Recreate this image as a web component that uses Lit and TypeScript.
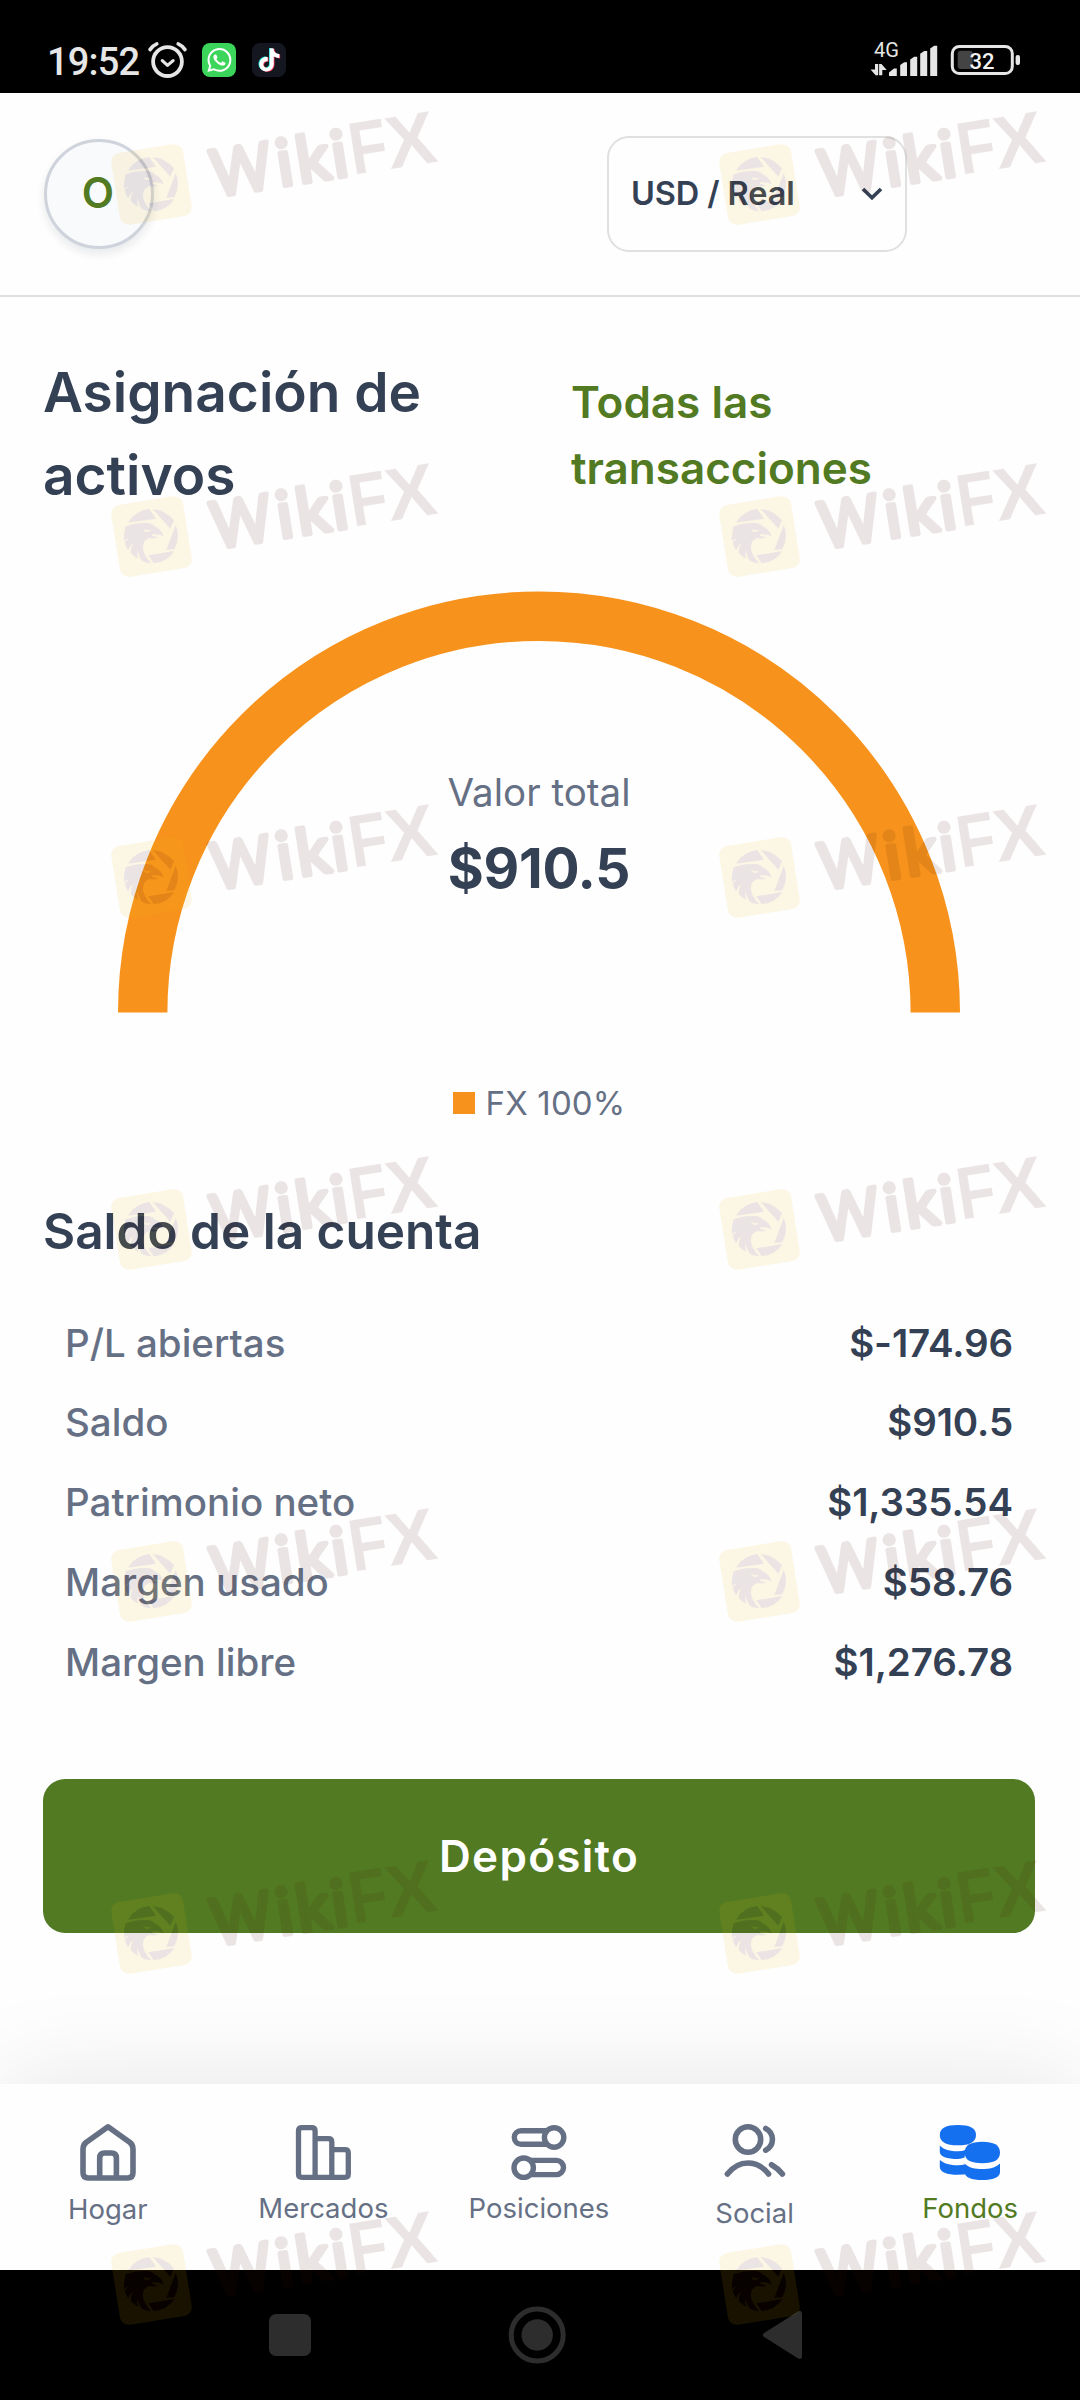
import { LitElement, html, css, svg } from "lit";
import { customElement, property } from "lit/decorators.js";

const NOTE =
  "M12.53.02C13.84 0 15.14.01 16.44 0c.08 1.53.63 3.09 1.75 4.17 1.12 1.11 2.7 1.62 4.24 1.79v4.03c-1.44-.05-2.89-.35-4.2-.97-.57-.26-1.1-.59-1.62-.93-.01 2.92.01 5.84-.02 8.75-.08 1.4-.54 2.79-1.35 3.94-1.31 1.92-3.58 3.17-5.91 3.21-1.43.08-2.86-.31-4.08-1.03-2.02-1.19-3.44-3.37-3.65-5.71-.02-.5-.03-1-.01-1.49.18-1.9 1.12-3.72 2.58-4.96 1.66-1.44 3.98-2.13 6.15-1.72.02 1.48-.04 2.96-.04 4.44-.99-.32-2.15-.23-3.02.37-.63.41-1.11 1.04-1.36 1.75-.21.51-.15 1.07-.14 1.61.24 1.64 1.82 3.02 3.5 2.87 1.12-.01 2.19-.66 2.77-1.61.19-.33.4-.67.41-1.06.1-1.79.06-3.57.07-5.36.01-4.03-.01-8.05.02-12.07z";
const WHATSAPP =
  "M17.472 14.382c-.297-.149-1.758-.867-2.03-.967-.273-.099-.471-.148-.67.15-.197.297-.767.966-.94 1.164-.173.199-.347.223-.644.075-.297-.15-1.255-.463-2.39-1.475-.883-.788-1.48-1.761-1.653-2.059-.173-.297-.018-.458.13-.606.134-.133.298-.347.446-.52.149-.174.198-.298.298-.497.099-.198.05-.371-.025-.52-.075-.149-.669-1.612-.916-2.207-.242-.579-.487-.5-.669-.51-.173-.008-.371-.01-.57-.01-.198 0-.52.074-.792.372-.272.297-1.04 1.016-1.04 2.479 0 1.462 1.065 2.875 1.213 3.074.149.198 2.096 3.2 5.077 4.487.709.306 1.262.489 1.694.625.712.227 1.36.195 1.871.118.571-.085 1.758-.719 2.006-1.413.248-.694.248-1.289.173-1.413-.074-.124-.272-.198-.57-.347m-5.421 7.403h-.004a9.87 9.87 0 01-5.031-1.378l-.361-.214-3.741.982.998-3.648-.235-.374a9.86 9.86 0 01-1.51-5.26c.001-5.45 4.436-9.884 9.888-9.884 2.64 0 5.122 1.03 6.988 2.898a9.825 9.825 0 012.893 6.994c-.003 5.45-4.437 9.884-9.885 9.884m8.413-18.297A11.815 11.815 0 0012.05 0C5.495 0 .16 5.335.157 11.892c0 2.096.547 4.142 1.588 5.945L.057 24l6.305-1.654a11.882 11.882 0 005.683 1.448h.005c6.554 0 11.89-5.335 11.893-11.893a11.821 11.821 0 00-3.48-8.413Z";

@customElement("status-bar")
export class StatusBar extends LitElement {
  static styles = css`
    :host {
      display: flex;
      align-items: flex-start;
      justify-content: space-between;
      box-sizing: border-box;
      height: 93px;
      padding: 31px 60px 0 47px;
      background: #000;
      color: #e6e6e6;
      font-family: Roboto, sans-serif;
    }
    .left {
      display: flex;
      align-items: flex-start;
      padding-top: 10px;
    }
    .time {
      width: 100px;
      font-size: 38px;
      font-weight: 500;
      line-height: 42px;
      letter-spacing: -0.800px;
    }
    .alarm {
      margin-right: 14px;
    }
    .app {
      margin: 2px 16px 0 0;
    }
    svg {
      display: block;
    }
    .right {
      width: 152px;
      height: 50px;
    }
  `;

  render() {
    return html`
      <div class="left">
        <span class="time">19:52</span>
        <svg class="alarm" width="41" height="38" viewBox="0 0 41 38" fill="none" stroke="#e6e6e6" stroke-linecap="round" stroke-linejoin="round">
          <circle cx="20.5" cy="20.6" r="14.4" stroke-width="3.8" />
          <path d="M15.3 19.6l5.2 4.8 5.6-4.8" stroke-width="3.2" />
          <path d="M3 8.600Q6 4.300 9.800 2.800M38 8.600Q35 4.300 31.200 2.800" stroke-width="3.600" />
        </svg>
        <svg class="app" width="34" height="34" viewBox="0 0 34 34">
          <rect width="34" height="34" rx="8" fill="#3bd55b" />
          <path transform="translate(5.400 5)" d=${WHATSAPP} fill="#fff" />
        </svg>
        <svg class="app" width="34" height="34" viewBox="0 0 34 34">
          <rect width="34" height="34" rx="8" fill="#141620" />
          <path transform="translate(5 5) scale(.96)" d=${NOTE} fill="#25e6e0" />
          <path transform="translate(6.600 5.800) scale(.96)" d=${NOTE} fill="#f8385c" />
          <path transform="translate(5.800 5.400) scale(.96)" d=${NOTE} fill="#fff" />
        </svg>
      </div>
      <svg class="right" viewBox="868 31 152 50">
        <text x="874" y="57" font-size="20" textLength="25" lengthAdjust="spacingAndGlyphs" fill="#e6e6e6">4G</text>
        <g fill="#e6e6e6">
          <path d="M875 64h3.200v11.300h-2.600l-5-5.800h4.400zM882.300 75.300h-3.200V64h2.400l5.200 6h-4.400z" />
          <path d="M889 76v-3.500l5-4h2.800V76z" />
          <path d="M900.200 76V65l4-2.700h2.800V76z" />
          <path d="M910.200 76V59.500l4-2.800h3V76z" />
          <path d="M920.200 76V53.700l4-2.700h3V76z" />
          <path d="M930.200 76V48.500l4-2.800h3V76z" />
          <rect x="1015.600" y="55" width="4.400" height="10" rx="2" />
        </g>
        <rect x="952.300" y="46.500" width="60" height="27" rx="7" fill="none" stroke="#e6e6e6" stroke-width="3" />
        <rect x="957.700" y="50.700" width="15" height="18.300" rx="3" fill="#444" />
        <text x="982" y="68.800" font-size="22" font-weight="500" text-anchor="middle" fill="#f2f2f2">32</text>
      </svg>
    `;
  }
}

@customElement("account-header")
export class AccountHeader extends LitElement {
  static styles = css`
    :host {
      display: flex;
      align-items: center;
      justify-content: space-between;
      box-sizing: border-box;
      height: 204px;
      padding: 0 173px 0 44px;
      border-bottom: 2px solid #dfe0e0;
    }
    .avatar {
      box-sizing: border-box;
      width: 110px;
      height: 110px;
      padding-right: 2px;
      border: 3px solid #cfd3dc;
      border-radius: 50%;
      background: #f8fafc;
      box-shadow: 0 5px 10px rgba(16, 24, 40, 0.09);
      color: #517a22;
      font-size: 42px;
      font-weight: 600;
      line-height: 102px;
      text-align: center;
    }
    .select {
      display: flex;
      align-items: center;
      justify-content: space-between;
      box-sizing: border-box;
      width: 300px;
      height: 116px;
      padding: 0 22px;
      border: 2px solid #dfe0e0;
      border-radius: 22px;
      color: #344054;
      font-size: 32.5px;
      font-weight: 600;
      line-height: 40px;
      letter-spacing: -0.1px;
    }
    .select span {
      padding-bottom: 1px;
    }
  `;

  render() {
    return html`
      <div class="avatar">O</div>
      <div class="select">
        <span>USD / Real</span>
        <svg width="22" height="14" viewBox="0 0 22 14" fill="none" stroke="#344054" stroke-width="3.600">
          <path d="M2 2l9 8.800L20 2" />
        </svg>
      </div>
    `;
  }
}

@customElement("asset-gauge")
export class AssetGauge extends LitElement {
  static styles = css`
    :host {
      display: grid;
      justify-items: center;
      width: 842px;
      margin: 74px auto 0;
    }
    .arc,
    .total {
      grid-area: 1 / 1;
    }
    .arc {
      display: block;
    }
    .total {
      padding-top: 172px;
      text-align: center;
    }
    .label {
      color: #667085;
      font-size: 38.5px;
      line-height: 58px;
    }
    .value {
      color: #344054;
      font-size: 55px;
      font-weight: 700;
      line-height: 94px;
      letter-spacing: -0.3px;
    }
  `;

  render() {
    return html`
      <svg class="arc" width="842" height="422" viewBox="0 0 842 422">
        <path d="M24.700 421.500A396.300 396.300 0 0 1 817.300 421.500" fill="none" stroke="#f7931c" stroke-width="49.400" />
      </svg>
      <div class="total">
        <div class="label">Valor total</div>
        <div class="value">$910.5</div>
      </div>
    `;
  }
}

const ICONS: Record<string, unknown> = {
  home: svg`<g fill="none" stroke="#667085" stroke-width="5.600" stroke-linejoin="round">
    <path d="M33 7.800L11 23.500Q8 26 8 30V53.500Q8 59 13.500 59H52.500Q58 59 58 53.500V30Q58 26 55 23.500Z" />
    <path d="M24.700 59V39Q24.700 34 29.500 34H36.500Q41.400 34 41.400 39V59" /></g>`,
  markets: svg`<g fill="none" stroke="#667085" stroke-width="5.300" stroke-linejoin="round">
    <path d="M25.100 58.300H12Q8.500 58.300 8.500 55V12Q8.500 8.700 12 8.700H21.600Q25.100 8.700 25.100 12Z" />
    <path d="M25.100 19.700H38.400Q41.800 19.700 41.800 23V58.300H25.100" />
    <path d="M41.800 30.700H55Q58.300 30.700 58.300 34V55Q58.300 58.300 55 58.300H41.800" /></g>`,
  positions: svg`<g fill="none" stroke="#667085" stroke-width="5.400">
    <circle cx="48.100" cy="18.500" r="9.700" />
    <path d="M42 11.800H15a6.700 6.700 0 0 0 0 13.400H42" />
    <circle cx="17.700" cy="48.700" r="9.700" />
    <path d="M24 41.400H50.400a7.100 7.100 0 0 1 0 14.200H24" /></g>`,
  social: svg`<g fill="none" stroke="#667085" stroke-width="5.600" stroke-linecap="round">
    <circle cx="26" cy="20.500" r="12.700" />
    <path d="M43.700 9.400A12.200 12.200 0 0 1 43.700 31.200" />
    <path d="M5.400 55C17 40.300 35 40.300 46.600 55" />
    <path d="M49.500 45.700Q56.200 49.500 60.400 55" /></g>`,
  funds: svg`<g fill="#1570ef">
    <path d="M2.800 16C2.800 9 9 6 20.900 6S39 9 39 16S33 26.300 20.900 26.300S2.800 23 2.800 16Z" />
    <path d="M2.800 26.500C7 31 13 32.200 20.900 32.200Q25 32.200 28.500 31L27.600 38.600Q24.500 40 20.900 40C10 40 2.800 37.500 2.800 33Z" />
    <path d="M2.800 41C8 45 13 46.200 20.900 46.200Q25 46.200 27.600 45.600L32 54.500Q27 55.800 20.900 55.800C10 55.800 2.800 53 2.800 48Z" />
    <path d="M27.600 33.500C27.600 26 34 22.700 45.300 22.700S63 26 63 33.500S57 44.200 45.300 44.200S27.600 41 27.600 33.500Z" />
    <path d="M27.600 44.500C32 49 38 50 45.300 50S58 49 63 44.500V53C63 58.500 56 61 45.300 61S27.600 58.500 27.600 53Z" /></g>`,
};

@customElement("nav-item")
export class NavItem extends LitElement {
  @property() icon = "home";

  static styles = css`
    :host {
      display: flex;
      flex-direction: column;
      align-items: center;
      flex: 1 1 0;
      padding-top: 35px;
      color: #667085;
      font-size: 27.5px;
      line-height: 40px;
    }
    :host([icon="home"]) svg {
      margin-bottom: 4px;
    }
    :host([icon="social"]) svg {
      margin-bottom: 8px;
    }
    svg {
      display: block;
      margin-bottom: 3px;
    }
  `;

  render() {
    return html`
      <svg width="66" height="66" viewBox="0 0 66 66">${ICONS[this.icon]}</svg>
      <span><slot></slot></span>
    `;
  }
}

@customElement("brand-mark")
export class BrandMark extends LitElement {
  static styles = css`
    :host {
      display: block;
      width: 334px;
      height: 124px;
      opacity: 0.1;
    }
    svg {
      display: block;
      overflow: visible;
    }
    .word {
      fill: #481208;
      stroke: #481208;
      stroke-linejoin: round;
    }
    .soft {
      font-family: Lato, sans-serif;
      font-size: 193px;
      font-weight: 400;
      stroke-width: 15px;
    }
    .sharp {
      font-family: "Liberation Sans", sans-serif;
      font-size: 222px;
      font-weight: 700;
      stroke-width: 0;
    }
  `;

  render() {
    return html`
      <svg width="334" height="124" viewBox="50 0 1002 372">
        <rect x="-109" y="-109" width="218" height="218" rx="27" transform="translate(180.500 229.500) rotate(-9)" fill="#efb40c" />
        <g fill="#481208">
          <path d="M110 188Q131 152 174 147L194 176Z" />
          <path d="M184 147Q224 151 248 181L237 206Z" />
          <path d="M253 194Q269 230 249 268L225 270Z" />
          <path d="M171 286L249 273Q228 306 187 310Z" />
          <path d="M103 199Q130 188 165 189Q186 190 188 198Q210 206 217 229Q204 222 184 223L182 227L201 233Q188 237 174 234Q152 242 155 268Q160 290 180 310Q158 308 150 300Q140 285 140 272Q135 285 142 297Q124 287 118 278Q118 262 126 250Q112 262 111 272Q103 262 100 247Q108 240 113 235Q104 238 98 243Q96 222 103 199Z" />
        </g>
        <path d="M155 206Q168 213 180 210Q172 219 160 214Z" fill="#efb40c" />
        <g transform="translate(180.500 229.500) rotate(-9)">
          <text class="word soft" text-anchor="middle"><tspan x="273" y="66" textLength="181" lengthAdjust="spacingAndGlyphs">W</tspan><tspan x="404">i</tspan><tspan x="490">k</tspan><tspan x="570">i</tspan><tspan class="sharp" x="659" y="66" textLength="115" lengthAdjust="spacingAndGlyphs">F</tspan><tspan class="sharp" x="789">X</tspan></text>
        </g>
      </svg>
    `;
  }
}

const BALANCE: [string, string][] = [
  ["P/L abiertas", "$-174.96"],
  ["Saldo", "$910.5"],
  ["Patrimonio neto", "$1,335.54"],
  ["Margen usado", "$58.76"],
  ["Margen libre", "$1,276.78"],
];

@customElement("app-root")
export class AppRoot extends LitElement {
  static styles = css`
    :host {
      display: flex;
      flex-direction: column;
      position: relative;
      width: 1080px;
      height: 2400px;
      overflow: hidden;
      background: #fefefe;
      color: #344054;
      font-family: Inter, sans-serif;
    }
    status-bar,
    account-header {
      flex: none;
    }
    main {
      flex: 1;
      padding: 54px 45px 0 43px;
    }
    .titles {
      display: grid;
      grid-template-columns: 528px 1fr;
      align-items: center;
    }
    h1 {
      width: 480px;
      margin: 0;
      font-size: 55px;
      font-weight: 600;
      line-height: 83px;
    }
    .link {
      width: 330px;
      padding-top: 1px;
      color: #517a22;
      font-size: 44px;
      font-weight: 600;
      line-height: 66px;
    }
    .legend {
      display: flex;
      align-items: center;
      justify-content: center;
      gap: 11px;
      margin-top: 65px;
      color: #667085;
      font-size: 33px;
      line-height: 50px;
      letter-spacing: 0.15px;
    }
    .swatch {
      width: 22px;
      height: 22px;
      background: #f7931c;
    }
    h2 {
      margin: 66px 0 35.600px;
      font-size: 49.5px;
      font-weight: 600;
      line-height: 74px;
    }
    .row {
      display: flex;
      justify-content: space-between;
      padding: 0 22px;
      font-size: 38.5px;
      line-height: 79.800px;
    }
    .row .name {
      color: #667085;
      font-weight: 500;
    }
    .row .amount {
      font-weight: 600;
      letter-spacing: -0.1px;
    }
    .deposit {
      display: block;
      width: 100%;
      height: 154px;
      margin-top: 76px;
      padding: 0;
      border: 0;
      border-radius: 22px;
      background: #517a22;
      color: #fff;
      font: 600 44px Inter, sans-serif;
      letter-spacing: 1.300px;
    }
    nav {
      display: flex;
      flex: none;
      height: 186px;
      padding-right: 2px;
      background: #fefefe;
      box-shadow: 0 0 104px rgba(0, 0, 0, 0.1);
    }
    .active {
      color: #517a22;
    }
    .system {
      display: flex;
      align-items: center;
      flex: none;
      height: 130px;
      padding-left: 269px;
      background: #000;
      z-index: 1;
    }
    .watermarks {
      position: absolute;
      inset: 0;
      z-index: 2;
      pointer-events: none;
    }
    brand-mark {
      position: absolute;
    }
  `;

  render() {
    const rows = [107.5, 459.5, 800.5, 1152.5, 1504.5, 1856.5, 2207.5];
    return html`
      <status-bar></status-bar>
      <account-header></account-header>
      <main>
        <div class="titles">
          <h1>Asignación de activos</h1>
          <div class="link">Todas las transacciones</div>
        </div>
        <asset-gauge></asset-gauge>
        <div class="legend"><span class="swatch"></span><span>FX 100%</span></div>
        <h2>Saldo de la cuenta</h2>
        ${BALANCE.map(
          ([name, amount]) => html`<div class="row"><span class="name">${name}</span><span class="amount">${amount}</span></div>`
        )}
        <button class="deposit">Depósito</button>
      </main>
      <nav>
        <nav-item icon="home">Hogar</nav-item>
        <nav-item icon="markets">Mercados</nav-item>
        <nav-item icon="positions">Posiciones</nav-item>
        <nav-item icon="social">Social</nav-item>
        <nav-item icon="funds"><span class="active">Fondos</span></nav-item>
      </nav>
      <div class="system">
        <svg width="540" height="60" viewBox="269 2305 540 60" fill="#2d2d2d">
          <rect x="269" y="2314" width="42" height="42" rx="7" />
          <circle cx="537.200" cy="2335" r="26" fill="none" stroke="#2d2d2d" stroke-width="5" />
          <circle cx="537.200" cy="2335" r="15.700" />
          <path d="M765.500 2335L799.500 2313.500V2356.500Z" stroke="#2d2d2d" stroke-width="5" stroke-linejoin="round" />
        </svg>
      </div>
      <div class="watermarks">
        ${rows.map(
          (y) => html`<brand-mark style="left:108.300px;top:${y}px"></brand-mark><brand-mark style="left:716.200px;top:${y}px"></brand-mark>`
        )}
      </div>
    `;
  }
}
